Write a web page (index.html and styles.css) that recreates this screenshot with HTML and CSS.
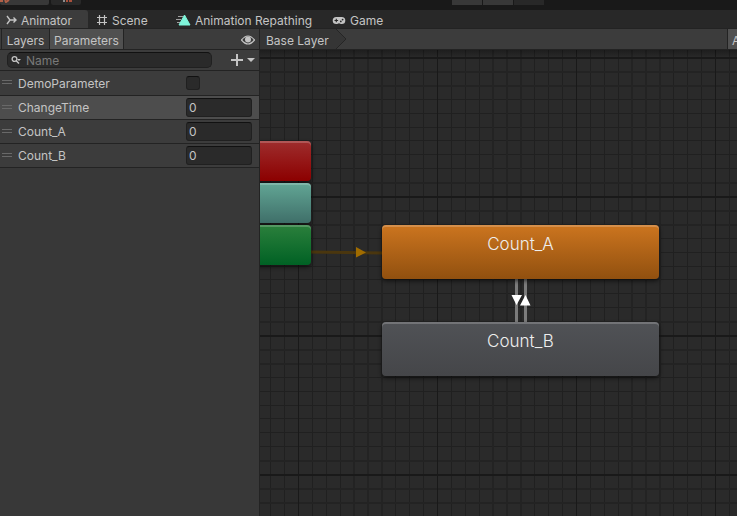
FILE: index.html
```
<!DOCTYPE html>
<html lang="en">
<head>
  <meta charset="utf-8">
  <title>Animator</title>
  <link rel="stylesheet" href="styles.css">
</head>
<body>
  <div class="editor">
    <div class="topbar">
      <div class="top-left">
        <span class="top-button top-wide">
          <svg width="10" height="3" viewBox="0 0 10 3" fill="none" stroke="#b06048" stroke-width="2"><path d="M0 1h3M5 0l1 2 3-2"/></svg>
        </span>
        <span class="top-button top-narrow">
          <svg width="10" height="3" viewBox="0 0 10 3" stroke-width="2"><path d="M1 0v2" stroke="#8c8c8c"/><path d="M4 0v2M6 1h3" stroke="#a8503c"/></svg>
        </span>
      </div>
      <div class="top-play">
        <span></span><span></span><span class="off"></span>
      </div>
    </div>

    <nav class="tabs">
      <button class="tab tab-animator active">
        <svg width="11" height="10" viewBox="0 0 11 10" fill="none" stroke="#c4c4c4" stroke-width="1.4"><path d="M1 1l3 4-3 4M3.500 5H10M7.500 2.500L10 5 7.500 7.500"/></svg>
        Animator
      </button>
      <button class="tab tab-scene">
        <svg width="12" height="12" viewBox="0 0 12 12" fill="none" stroke="#c4c4c4" stroke-width="1.2"><path d="M3.500 1v10M8.500 1v10M1 3.500h10M1 8.500h10"/></svg>
        Scene
      </button>
      <button class="tab tab-repath">
        <svg width="16" height="12" viewBox="0 0 16 12"><path d="M3 2.500h5M1 5.500h5M2 8.500h4" stroke="#a0a0a0"/><path d="M9.500 1L15 11H4z" fill="#7ff5da" stroke="#7ff5da" stroke-linejoin="round"/></svg>
        Animation Repathing
      </button>
      <button class="tab tab-game">
        <svg width="14" height="9" viewBox="0 0 14 10"><path d="M4 1h6a4 4 0 0 1 0 8c-1.200 0-2-1-3-1s-1.800 1-3 1a4 4 0 0 1 0-8z" fill="#c4c4c4"/><path d="M2 5h4M4 3v4" stroke="#282828" stroke-width="1.200"/><circle cx="9" cy="6" r="1" fill="#282828"/><circle cx="11" cy="4" r="1" fill="#282828"/></svg>
        Game
      </button>
    </nav>

    <div class="main">
      <aside class="panel">
        <div class="toolbar panel-toolbar">
          <button class="mode mode-layers">Layers</button>
          <button class="mode mode-params selected">Parameters</button>
          <button class="eye" aria-label="Hide panel">
            <svg width="14" height="10" viewBox="0 0 14 10"><path d="M0.500 5Q7-3 13.500 5 7 13 0.500 5z" fill="none" stroke="#c4c4c4" stroke-width="1.200"/><circle cx="7" cy="4.500" r="3" fill="#c4c4c4"/></svg>
          </button>
        </div>
        <div class="search-row">
          <label class="search">
            <svg width="12" height="10" viewBox="0 0 12 10"><circle cx="3.500" cy="4" r="2.400" fill="none" stroke="#c4c4c4" stroke-width="1.300"/><path d="M5.200 5.700L8 8.500" stroke="#c4c4c4" stroke-width="1.500"/><path d="M6 4h4L8 6z" fill="#c4c4c4"/></svg>
            <input type="text" placeholder="Name" aria-label="Search parameters">
          </label>
          <button class="add" aria-label="Add parameter">
            <svg width="26" height="12" viewBox="0 0 26 12"><path d="M7 0v12M1 6h12" stroke="#c4c4c4" stroke-width="2"/><path d="M17 4h8l-4 4z" fill="#c4c4c4"/></svg>
          </button>
        </div>
        <div class="param">
          <span class="handle"></span>
          <label for="demo">DemoParameter</label>
          <input type="checkbox" id="demo">
        </div>
        <div class="param current">
          <span class="handle"></span>
          <label for="change">ChangeTime</label>
          <input type="text" id="change" value="0">
        </div>
        <div class="param">
          <span class="handle"></span>
          <label for="count-a">Count_A</label>
          <input type="text" id="count-a" value="0">
        </div>
        <div class="param">
          <span class="handle"></span>
          <label for="count-b">Count_B</label>
          <input type="text" id="count-b" value="0">
        </div>
      </aside>

      <section class="graph">
        <div class="toolbar graph-toolbar">
          <button class="crumb">Base Layer</button>
          <svg class="crumb-end" width="11" height="20" viewBox="0 0 11 20"><path d="M0 0l10 10L0 20z" fill="#353535"/><path d="M0 0l10 10L0 20" fill="none" stroke="#252525"/></svg>
          <button class="auto">Auto Live Link</button>
        </div>
        <div class="canvas">
          <svg class="grid" width="100%" height="100%">
            <defs>
              <!-- one big square, ten small squares on each side -->
              <pattern id="squares" x="38" y="7" width="139" height="139" patternUnits="userSpaceOnUse">
                <path d="M14 0h1v139h-1zM28 0h1v139h-1zM42 0h1v139h-1zM97 0h1v139h-1zM111 0h1v139h-1zM125 0h1v139h-1zM0 42h139v1H0zM0 56h139v1H0zM0 70h139v1H0zM0 83h139v1H0zM0 97h139v1H0zM0 111h139v1H0z" fill="#202020"/>
                <path d="M55 0h2v139h-2zM69 0h2v139h-2zM83 0h2v139h-2zM0 14h139v2H0zM0 28h139v2H0zM0 125h139v2H0z" fill="#232323"/>
                <path d="M0 0h1v139H0zM0 0h139v2H0z" fill="#191919"/>
              </pattern>
              <linearGradient id="shade" x1="0" y1="0" x2="0" y2="1">
                <stop offset="0" stop-color="#000" stop-opacity="0.3"/>
                <stop offset="1" stop-color="#000" stop-opacity="0"/>
              </linearGradient>
            </defs>
            <rect width="100%" height="100%" fill="url(#squares)"/>
            <rect width="100%" height="8" fill="url(#shade)"/>
            <!-- entry transition -->
            <path d="M51 202L122 203" stroke="#4a360e" stroke-width="3"/>
            <path d="M96 197l10 5.500-10 5z" fill="#a06c00"/>
            <!-- transitions between the two states -->
            <path d="M256.500 229v43M265.500 229v43" stroke="#7c7c7c" stroke-width="3"/>
            <path d="M251.500 245h10.500l-5.500 10zM260 255.500h10.500l-5-10.500z" fill="#fff"/>
          </svg>
          <div class="node short exit"></div>
          <div class="node short any"></div>
          <div class="node short entry"></div>
          <div class="node state default">Count_A</div>
          <div class="node state other">Count_B</div>
        </div>
      </section>
    </div>
  </div>
</body>
</html>
```
FILE: styles.css
```
* {
  box-sizing: border-box;
}
body {
  margin: 0;
  background-color: #191919;
  color: #c4c4c4;
  font-family: Inter, sans-serif;
  font-size: 12px;
}
button, input {
  margin: 0;
  border: 0;
  padding: 0;
  background: none;
  color: inherit;
  font: inherit;
}
svg {
  display: block;
  flex: none;
}
.editor {
  display: flex;
  flex-direction: column;
  height: 100vh;
  overflow: hidden;
}

/* Main toolbar, only its bottom edge is in view */
.topbar {
  display: grid;
  grid-template-columns: 1fr auto 1fr;
  flex: none;
  height: 10px;
}
.top-left {
  display: flex;
  gap: 2px;
}
.top-button {
  height: 5px;
  border-radius: 0 0 2px 2px;
  background-color: #383838;
}
.top-wide {
  width: 49px;
}
.top-narrow {
  width: 30px;
  padding-left: 12px;
  background-color: #282828;
}
.top-play {
  display: flex;
  gap: 1px;
  margin-left: 259px;
}
.top-play span {
  width: 30px;
  height: 5px;
  background-color: #383838;
}
.top-play .off {
  background-color: #282828;
}

/* Window tabs */
.tabs {
  display: flex;
  flex: none;
  height: 19px;
  border-bottom: 1px solid #232323;
  background-color: #282828;
}
.tab {
  display: flex;
  align-items: center;
  gap: 4px;
  padding: 2px 0 0 8px;
  white-space: nowrap;
}
.tab-animator {
  width: 88px;
  padding-left: 6px;
}
.tab-scene {
  width: 86px;
}
.tab-repath {
  width: 156px;
  padding-left: 1px;
}
.tab-game {
  padding-left: 2px;
}
.tab.active {
  border-radius: 0 3px 0 0;
  background-color: #3c3c3c;
}

.main {
  display: flex;
  flex: 1;
  min-height: 0;
}
.toolbar {
  display: flex;
  flex: none;
  height: 21px;
  border-bottom: 1px solid #232323;
  background-color: #3c3c3c;
}
.toolbar button {
  padding-top: 2px;
}

/* Parameter list */
.panel {
  flex: none;
  width: 260px;
  border-right: 1px solid #232323;
  background-color: #383838;
}
.mode {
  border-right: 1px solid #232323;
}
.mode-layers {
  width: 49px;
  border-left: 1px solid #232323;
  margin-left: 1px;
}
.mode-params {
  width: 74px;
}
.selected {
  background-color: #505050;
}
.eye {
  margin-left: auto;
  padding: 0 4px;
}
.search-row {
  display: flex;
  align-items: center;
  justify-content: space-between;
  height: 21px;
  padding: 0 3px 0 7px;
  border-bottom: 1px solid #232323;
  background-color: #3c3c3c;
}
.search {
  display: flex;
  align-items: center;
  gap: 3px;
  width: 205px;
  height: 16px;
  border: 1px solid #202020;
  border-top-color: #111;
  border-radius: 5px;
  padding-left: 3px;
  background-color: #2a2a2a;
}
.search input {
  min-width: 0;
  outline: 0;
}
.search input::placeholder {
  color: #797979;
  opacity: 1;
}
.param {
  display: flex;
  align-items: center;
  height: 24px;
  border-bottom: 1px solid #232323;
  background-color: #3c3c3c;
}
.search-row + .param {
  height: 25px;
}
.current {
  background-color: #4d4d4d;
}
.handle {
  width: 10px;
  height: 4px;
  margin: 0 6px 2px 2px;
  border-top: 1px solid #696969;
  border-bottom: 1px solid #696969;
}
.param label {
  width: 168px;
}
.param input {
  border: 1px solid #202020;
  border-top-color: #111;
  border-radius: 3px;
  background-color: #2a2a2a;
}
.param input[type="text"] {
  width: 66px;
  height: 19px;
  padding-left: 2px;
}
.param input[type="checkbox"] {
  appearance: none;
  width: 14px;
  height: 14px;
}

/* State machine */
.graph {
  display: flex;
  flex: 1;
  flex-direction: column;
  min-width: 0;
}
.graph-toolbar {
  overflow: hidden;
}
.crumb {
  flex: none;
  width: 76px;
  padding-left: 6px;
  background-color: #353535;
  text-align: left;
  white-space: nowrap;
}
.auto {
  flex: none;
  width: 96px;
  /* runs past the right edge of the window */
  margin: 0 -86px 0 auto;
  border-left: 1px solid #232323;
  padding-left: 4px;
  background-color: #505050;
  text-align: left;
  white-space: nowrap;
}
.canvas {
  position: relative;
  flex: 1;
  overflow: hidden;
  background-color: #2a2a2a;
}
.node {
  position: absolute;
  border-radius: 4px;
  box-shadow: inset 0 2px 0 rgba(255, 255, 255, 0.2), 0 2px 4px rgba(0, 0, 0, 0.6);
}
.short {
  left: -149px;
  width: 200px;
  height: 40px;
}
.exit {
  top: 91px;
  background: linear-gradient(#9e2d2d, #8c0000);
}
.any {
  top: 133px;
  background: linear-gradient(#62a695, #3f6f69);
}
.entry {
  top: 175px;
  background: linear-gradient(#2b803c, #006124);
}
.state {
  left: 122px;
  width: 277px;
  height: 54px;
  color: #eee;
  font-size: 17px;
  font-weight: 300;
  line-height: 38px;
  text-align: center;
}
.default {
  top: 175px;
  background: linear-gradient(#cc751f, #91500f);
}
.other {
  top: 272px;
  background: linear-gradient(#505256, #454649);
}
```
